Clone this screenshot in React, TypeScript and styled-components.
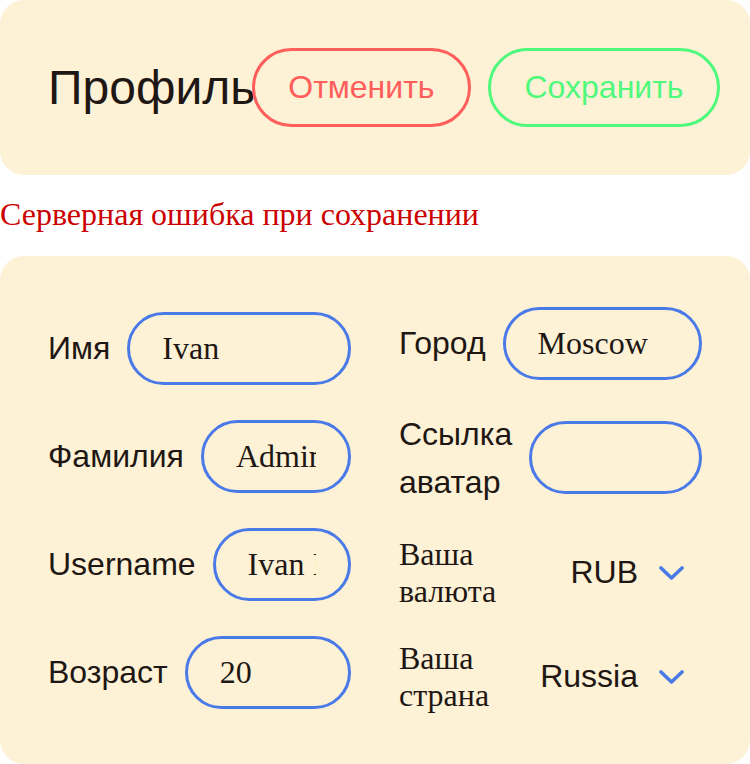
import React from "react";
import styled, { createGlobalStyle } from "styled-components";

const Global = createGlobalStyle`
  html, body { margin: 0; padding: 0; background: #ffffff; }
  body { font-family: "Liberation Sans", Arial, sans-serif; color: #1e1713; }
  * { box-sizing: border-box; }
`;

const Page = styled.div`
  width: 750px;
  display: flex;
  flex-direction: column;
`;

const HeaderCard = styled.header`
  height: 175px;
  background: #fdf1d6;
  border-radius: 24px;
  display: flex;
  align-items: center;
  padding: 0 30px 0 48px;
`;

const Title = styled.h1`
  margin: 0;
  flex: 0 1 auto;
  min-width: 0;
  font-family: "Liberation Sans", Arial, sans-serif;
  font-weight: 400;
  font-size: 48px;
  line-height: 1.15;
  color: #1e1713;
  white-space: nowrap;
`;

const ButtonGroup = styled.div`
  margin-left: auto;
  flex: 0 0 auto;
  display: flex;
  gap: 17px;
`;

const PillButton = styled.button<{ $color: string }>`
  height: 79px;
  padding: 0 33.5px;
  border: 3px solid ${(p) => p.$color};
  border-radius: 40px;
  background: transparent;
  color: ${(p) => p.$color};
  font-family: "Liberation Sans", Arial, sans-serif;
  font-size: 32px;
  cursor: pointer;
  white-space: nowrap;
`;

const ErrorText = styled.p`
  margin: 0;
  padding: 21px 0 23px;
  font-family: "Liberation Serif", "Times New Roman", serif;
  font-size: 32px;
  color: #cc0000;
`;

const FormCard = styled.section`
  height: 508px;
  background: #fdf1d6;
  border-radius: 24px;
  display: grid;
  grid-template-columns: 1fr 1fr;
  column-gap: 48px;
  align-items: center;
  padding: 0 48px;
`;

const Column = styled.div<{ $gap: number }>`
  display: flex;
  flex-direction: column;
  gap: ${(p) => p.$gap}px;
`;

const FieldRow = styled.label`
  display: flex;
  align-items: center;
  gap: 17px;
`;

const FieldLabel = styled.span<{ $maxWidth?: number }>`
  font-family: "Liberation Sans", Arial, sans-serif;
  font-size: 32px;
  line-height: 48px;
  color: #1e1713;
  flex: 0 0 auto;
  ${(p) => (p.$maxWidth ? `max-width: ${p.$maxWidth}px;` : "white-space: nowrap;")}
`;

const TextInput = styled.input`
  flex: 1 1 0;
  min-width: 0;
  width: 100%;
  height: 73px;
  padding: 0 32px;
  border: 3px solid #4a7ae8;
  border-radius: 40px;
  background: transparent;
  font-family: "Liberation Serif", "Times New Roman", serif;
  font-size: 32px;
  color: #1e1713;
  outline: none;
`;

const SelectRow = styled.div`
  display: flex;
  align-items: center;
`;

const SelectLabel = styled.span`
  font-family: "Liberation Serif", "Times New Roman", serif;
  font-size: 32px;
  max-width: 110px;
  color: #1e1713;
`;

const SelectBox = styled.button`
  flex: 1 1 auto;
  display: flex;
  align-items: center;
  justify-content: flex-end;
  gap: 21px;
  padding: 0 18px 0 0;
  border: none;
  background: transparent;
  font-family: "Liberation Sans", Arial, sans-serif;
  font-size: 32px;
  color: #1e1713;
  cursor: pointer;
`;

const Chevron = () => (
  <svg width="25" height="14" viewBox="0 0 25 14" fill="none">
    <polyline
      points="2,2 12.5,12 23,2"
      stroke="#4a7ae8"
      strokeWidth="3.6"
      strokeLinecap="round"
      strokeLinejoin="round"
    />
  </svg>
);

const leftFields = [
  { label: "Имя", value: "Ivan" },
  { label: "Фамилия", value: "Admin" },
  { label: "Username", value: "Ivan Ivanov" },
  { label: "Возраст", value: "20" },
];

export default function App() {
  return (
    <Page>
      <Global />
      <HeaderCard>
        <Title>Профиль</Title>
        <ButtonGroup>
          <PillButton $color="#ff5e5b">Отменить</PillButton>
          <PillButton $color="#4ff97b">Сохранить</PillButton>
        </ButtonGroup>
      </HeaderCard>
      <ErrorText>Серверная ошибка при сохранении</ErrorText>
      <FormCard>
        <Column $gap={35}>
          {leftFields.map((f) => (
            <FieldRow key={f.label}>
              <FieldLabel>{f.label}</FieldLabel>
              <TextInput defaultValue={f.value} />
            </FieldRow>
          ))}
        </Column>
        <Column $gap={30}>
          <FieldRow>
            <FieldLabel>Город</FieldLabel>
            <TextInput defaultValue="Moscow" />
          </FieldRow>
          <FieldRow>
            <FieldLabel $maxWidth={113}>Ссылка аватар</FieldLabel>
            <TextInput defaultValue="" />
          </FieldRow>
          <SelectRow>
            <SelectLabel>Ваша валюта</SelectLabel>
            <SelectBox type="button">
              RUB
              <Chevron />
            </SelectBox>
          </SelectRow>
          <SelectRow>
            <SelectLabel>Ваша страна</SelectLabel>
            <SelectBox type="button">
              Russia
              <Chevron />
            </SelectBox>
          </SelectRow>
        </Column>
      </FormCard>
    </Page>
  );
}
